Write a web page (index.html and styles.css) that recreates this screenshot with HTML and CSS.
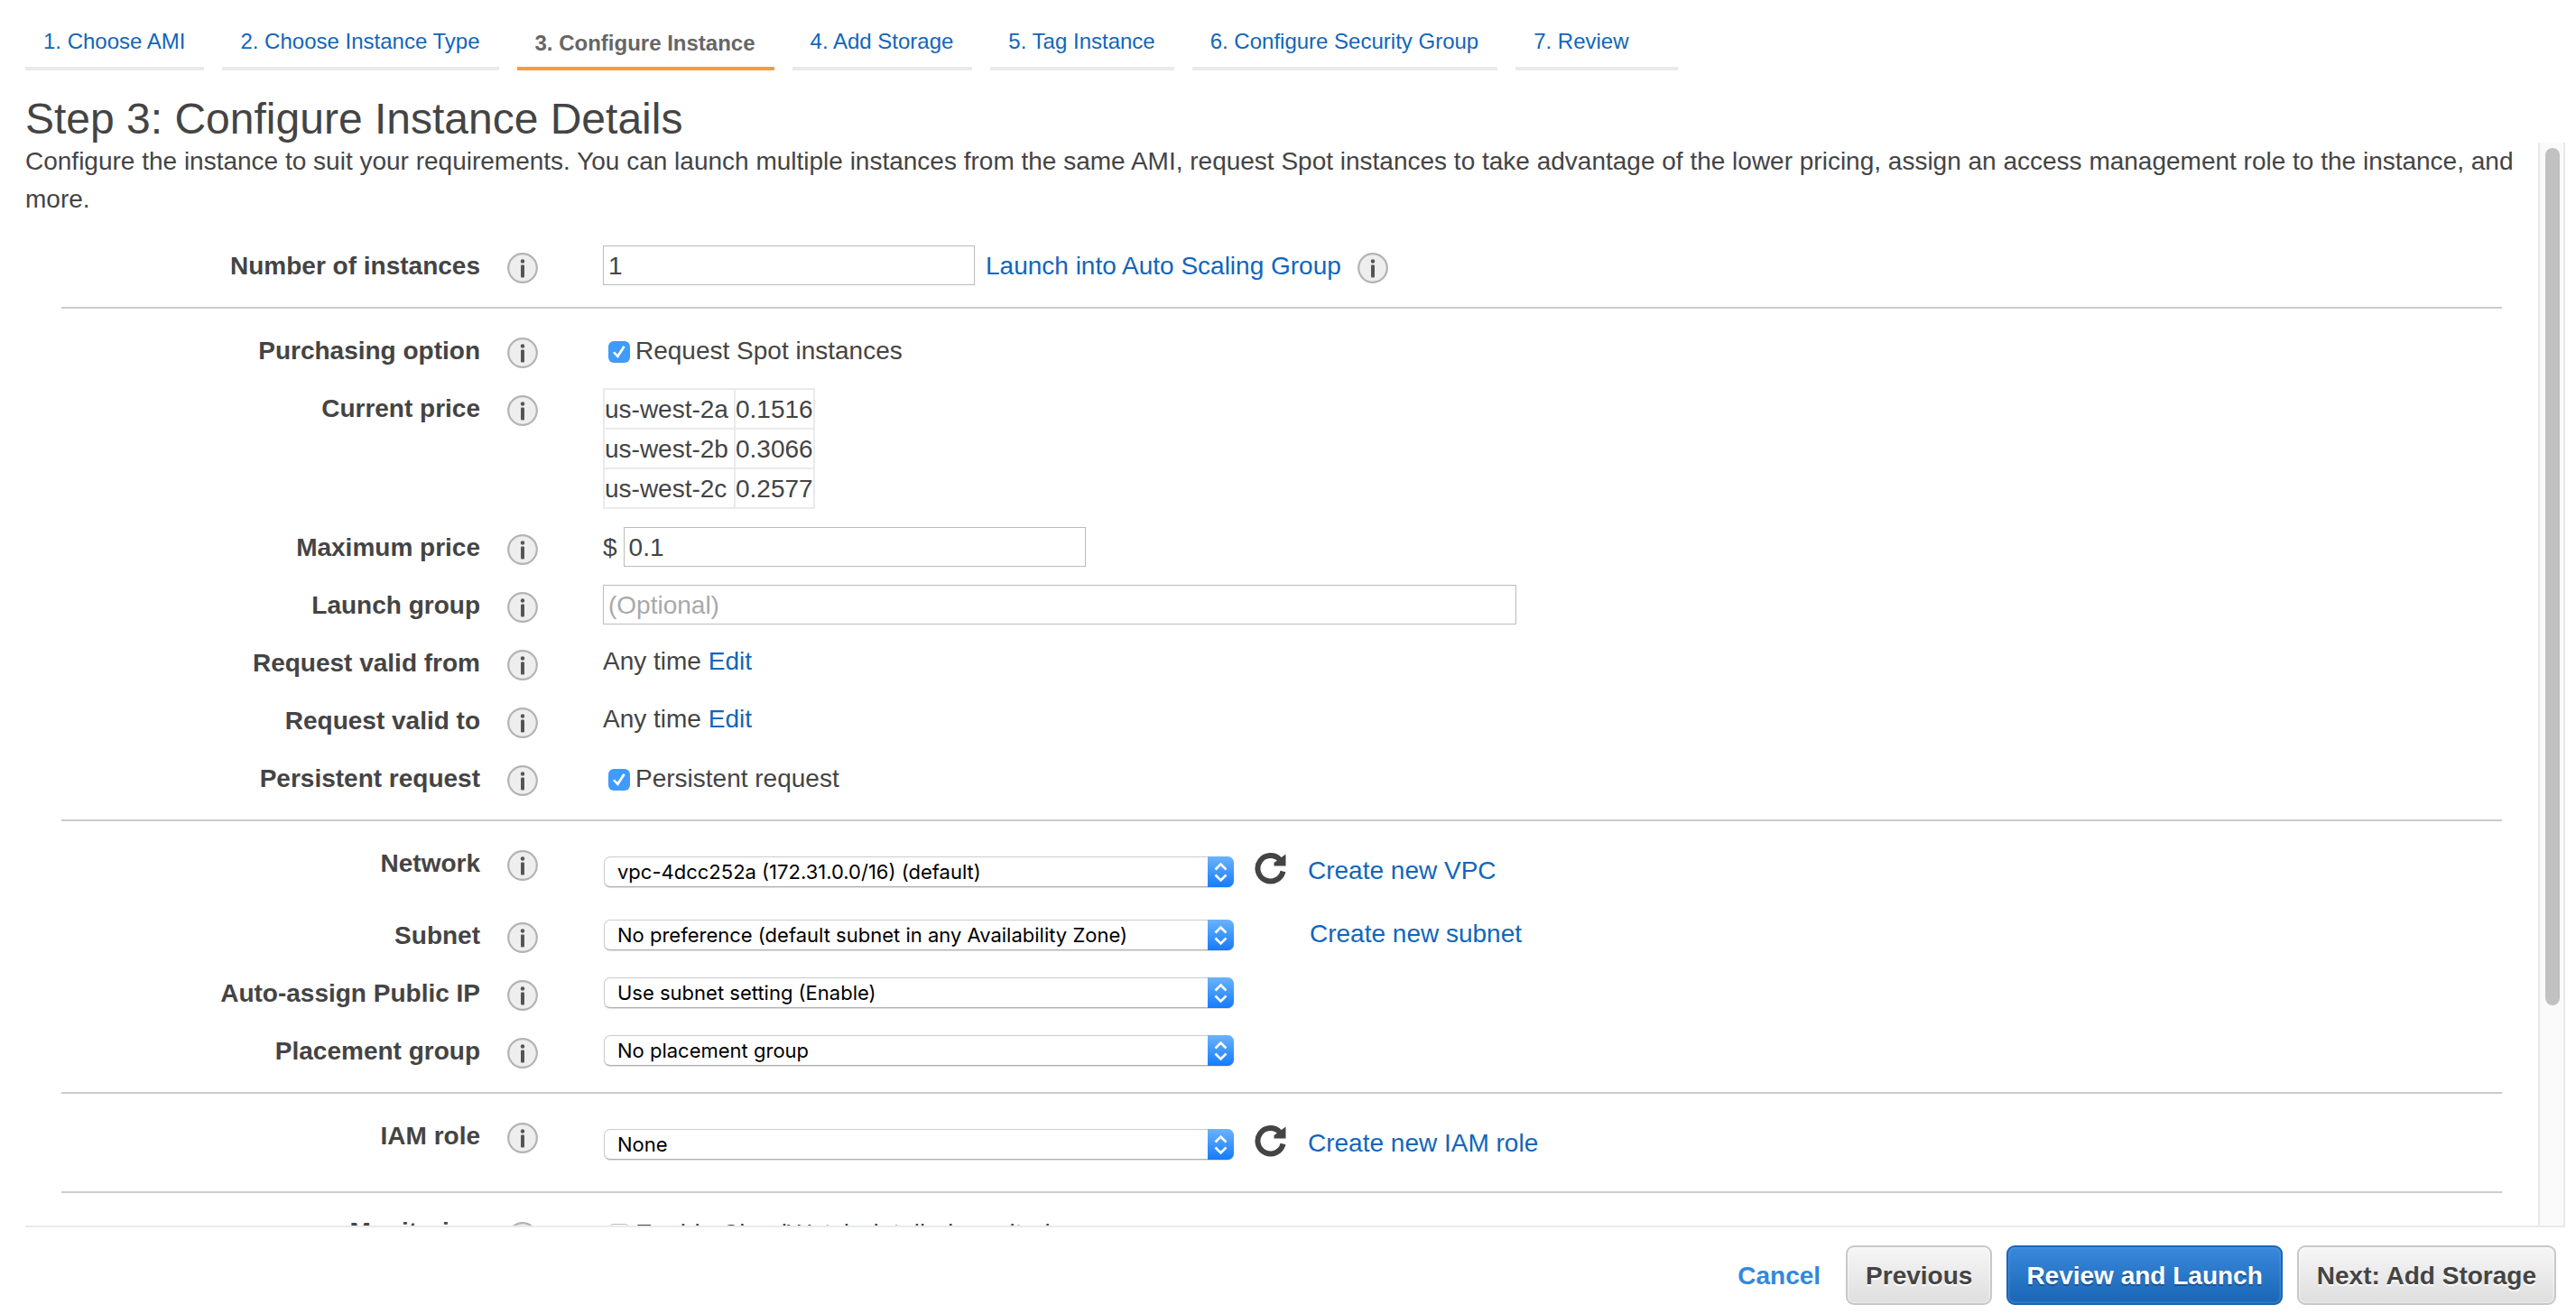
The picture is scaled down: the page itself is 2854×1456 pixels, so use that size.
FILE: index.html
```html
<!DOCTYPE html>
<html lang="en">
<head>
<meta charset="utf-8">
<title>Step 3: Configure Instance Details</title>
<link rel="stylesheet" href="styles.css">
</head>
<body>
<svg class="sprite" aria-hidden="true">
  <symbol id="info" viewBox="0 0 34 34">
    <circle cx="17" cy="17" r="15.8" fill="#eee" stroke="#b3b3b3" stroke-width="2.2"/>
    <circle cx="17" cy="9.500" r="2.200" fill="#555"/>
    <rect x="15" y="13.500" width="4" height="14" rx="1" fill="#555"/>
  </symbol>
  <symbol id="refresh" viewBox="0 0 35 35">
    <path d="M31.500 20.500A14.200 14.200 0 1 1 28 7.500" fill="none" stroke="#444" stroke-width="6"/>
    <path d="M34.500 1.500V14.500H21.500V11Z" fill="#444"/>
  </symbol>
  <symbol id="updown" viewBox="0 0 29 34">
    <path d="M8.500 14.500L14.500 8.500L20.500 14.500M8.500 20.500L14.500 26.500L20.500 20.500" fill="none" stroke="#fff" stroke-width="2.600"/>
  </symbol>
</svg>
<div class="page">
  <nav class="tabs">
    <a class="tab" href="#">1. Choose AMI</a>
    <a class="tab" href="#">2. Choose Instance Type</a>
    <a class="tab active" href="#" aria-current="step">3. Configure Instance</a>
    <a class="tab" href="#">4. Add Storage</a>
    <a class="tab" href="#">5. Tag Instance</a>
    <a class="tab" href="#">6. Configure Security Group</a>
    <a class="tab" href="#">7. Review</a>
  </nav>
  <h1 class="title">Step 3: Configure Instance Details</h1>
  <main class="content">
    <div class="scroll">
      <p class="intro">Configure the instance to suit your requirements. You can launch multiple instances from the same AMI, request Spot instances to take advantage of the lower pricing, assign an access management role to the instance, and more.</p>
      <form class="form">
        <section class="group">
          <div class="row">
            <label class="name" for="count">Number of instances</label>
            <svg class="info"><use href="#info"/></svg>
            <div class="control">
              <input class="text short" id="count" type="text" value="1">
              <a class="link beside-input" href="#">Launch into Auto Scaling Group</a>
              <svg class="info after-link"><use href="#info"/></svg>
            </div>
          </div>
        </section>
        <section class="group">
          <div class="row">
            <span class="name">Purchasing option</span>
            <svg class="info"><use href="#info"/></svg>
            <div class="control"><label class="check"><input type="checkbox" checked><span>Request Spot instances</span></label></div>
          </div>
          <div class="row">
            <span class="name">Current price</span>
            <svg class="info"><use href="#info"/></svg>
            <div class="control">
              <table class="prices">
                <tr><td class="zone">us-west-2a</td><td class="price">0.1516</td></tr>
                <tr><td class="zone">us-west-2b</td><td class="price">0.3066</td></tr>
                <tr><td class="zone">us-west-2c</td><td class="price">0.2577</td></tr>
              </table>
            </div>
          </div>
          <div class="row">
            <label class="name" for="max">Maximum price</label>
            <svg class="info"><use href="#info"/></svg>
            <div class="control money"><span class="currency">$</span><input class="text medium" id="max" type="text" value="0.1"></div>
          </div>
          <div class="row">
            <label class="name" for="group">Launch group</label>
            <svg class="info"><use href="#info"/></svg>
            <div class="control"><input class="text long" id="group" type="text" placeholder="(Optional)"></div>
          </div>
          <div class="row">
            <span class="name">Request valid from</span>
            <svg class="info"><use href="#info"/></svg>
            <div class="control"><p class="value">Any time <a href="#">Edit</a></p></div>
          </div>
          <div class="row">
            <span class="name">Request valid to</span>
            <svg class="info"><use href="#info"/></svg>
            <div class="control"><p class="value">Any time <a href="#">Edit</a></p></div>
          </div>
          <div class="row">
            <span class="name">Persistent request</span>
            <svg class="info"><use href="#info"/></svg>
            <div class="control"><label class="check"><input type="checkbox" checked><span>Persistent request</span></label></div>
          </div>
        </section>
        <section class="group">
          <div class="row tall">
            <label class="name" for="network">Network</label>
            <svg class="info"><use href="#info"/></svg>
            <div class="control">
              <span class="select"><select id="network"><option>vpc-4dcc252a (172.31.0.0/16) (default)</option></select><svg class="arrows"><use href="#updown"/></svg></span>
              <button class="refresh" type="button" aria-label="Refresh networks"><svg><use href="#refresh"/></svg></button>
              <a class="link" href="#">Create new VPC</a>
            </div>
          </div>
          <div class="row">
            <label class="name" for="subnet">Subnet</label>
            <svg class="info"><use href="#info"/></svg>
            <div class="control">
              <span class="select"><select id="subnet"><option>No preference (default subnet in any Availability Zone)</option></select><svg class="arrows"><use href="#updown"/></svg></span>
              <a class="link no-refresh" href="#">Create new subnet</a>
            </div>
          </div>
          <div class="row">
            <label class="name" for="ip">Auto-assign Public IP</label>
            <svg class="info"><use href="#info"/></svg>
            <div class="control">
              <span class="select"><select id="ip"><option>Use subnet setting (Enable)</option></select><svg class="arrows"><use href="#updown"/></svg></span>
            </div>
          </div>
          <div class="row">
            <label class="name" for="placement">Placement group</label>
            <svg class="info"><use href="#info"/></svg>
            <div class="control">
              <span class="select"><select id="placement"><option>No placement group</option></select><svg class="arrows"><use href="#updown"/></svg></span>
            </div>
          </div>
        </section>
        <section class="group">
          <div class="row tall">
            <label class="name" for="role">IAM role</label>
            <svg class="info"><use href="#info"/></svg>
            <div class="control">
              <span class="select"><select id="role"><option>None</option></select><svg class="arrows"><use href="#updown"/></svg></span>
              <button class="refresh" type="button" aria-label="Refresh roles"><svg><use href="#refresh"/></svg></button>
              <a class="link" href="#">Create new IAM role</a>
            </div>
          </div>
        </section>
        <section class="group last">
          <div class="row">
            <span class="name">Monitoring</span>
            <svg class="info"><use href="#info"/></svg>
            <div class="control"><label class="check"><input type="checkbox"><span>Enable CloudWatch detailed monitoring</span></label></div>
          </div>
        </section>
      </form>
    </div>
    <div class="track" aria-hidden="true"><div class="thumb"></div></div>
  </main>
  <footer class="actions">
    <a class="cancel" href="#">Cancel</a>
    <button class="btn" type="button">Previous</button>
    <button class="btn primary" type="button">Review and Launch</button>
    <button class="btn" type="button">Next: Add Storage</button>
  </footer>
</div>
</body>
</html>
```
FILE: styles.css
```css
* { box-sizing: border-box; }

body {
  margin: 0;
  background: #fff;
  color: #444;
  font: 28px/42px "Liberation Sans", Arial, sans-serif;
}

a {
  color: #1166bb;
  text-decoration: none;
}

p { margin: 0; }

.sprite { display: none; }

.page {
  display: flex;
  flex-direction: column;
  height: 100vh;
}

/* Wizard steps */
.tabs {
  display: flex;
  gap: 20px;
  padding-left: 28px;
}

.tab {
  padding: 32px 21px 14px 20px;
  border-bottom: 4px solid #eaeaea;
  font-size: 24px;
  line-height: 28px;
  white-space: nowrap;
}

.tab:last-child { min-width: 180px; }

.tab.active {
  padding-top: 34px;
  padding-bottom: 12px;
  border-color: #ff9933;
  color: #666;
  font-weight: bold;
}

.title {
  margin: 0;
  padding: 28px 28px 0;
  font-size: 48px;
  font-weight: normal;
  line-height: 52px;
}

/* Scrolling body */
.content {
  flex: 1;
  display: flex;
  min-height: 0;
  margin: 0 12px 0 28px;
  border-bottom: 2px solid #eaeaea;
}

.scroll {
  flex: 1;
  overflow-y: auto;
  scrollbar-width: none;
}

.track {
  width: 30px;
  padding: 6px 4px 6px 6px;
  border: solid #e8e8e8;
  border-width: 0 2px;
  background: #fafafa;
}

.thumb {
  width: 16px;
  height: 80%;
  border-radius: 8px;
  background: #c1c1c1;
}

.intro { margin-bottom: 6px; }

.form { padding: 0 40px; }

.group {
  display: flex;
  flex-direction: column;
  gap: 20px;
  padding: 24px 0;
  border-bottom: 2px solid #ccc;
}

.group.last {
  padding-bottom: 86px;
  border: 0;
}

.row {
  display: grid;
  grid-template-columns: 464px 34px 1fr;
  min-height: 44px;
}

.row.tall { min-height: 60px; }

.name {
  padding-top: 2px;
  font-weight: bold;
  text-align: right;
}

.info {
  width: 34px;
  height: 34px;
  margin: 8px 0 0 30px;
}

.control {
  display: flex;
  align-items: center;
  margin-left: 102px;
}

.link,
.currency { padding-top: 2px; }

.beside-input { margin-left: 12px; }
.info.after-link { margin: 6px 0 0 18px; }

.text {
  height: 44px;
  padding: 2px 5px 0;
  border: 1px solid #bbb;
  background: #fff;
  color: #444;
  font: inherit;
}

.text::placeholder { color: #a9a9a9; }
.text.short { width: 412px; }
.text.medium { width: 512px; }
.text.long { width: 1012px; }

.money { gap: 7px; }

.value {
  align-self: flex-start;
  padding-top: 2px;
  line-height: 38px;
}

.check {
  display: flex;
  align-items: center;
  gap: 6px;
  padding-left: 6px;
}

.check span { padding-top: 2px; }

.last .name,
.last .check {
  align-self: flex-start;
  padding-top: 0;
  line-height: 38px;
}

.check input {
  appearance: none;
  width: 24px;
  height: 24px;
  margin: 4px 0 0;
  border: 1px solid #bbb;
  border-radius: 6px;
}

.check input:checked {
  display: grid;
  place-items: center;
  border: 0;
  background: #3f9bfc;
}

.check input:checked::before {
  content: "";
  width: 14px;
  height: 14px;
  background: #fff;
  clip-path: polygon(0 58%, 14% 46%, 36% 70%, 82% 0, 98% 10%, 40% 100%);
}

.prices { border-collapse: collapse; }

.prices td {
  padding: 2px 0 0;
  border: 2px solid #eaeaea;
  line-height: 40px;
}

.zone { width: 145px; }
.price { width: 87px; }

/* Drop-downs */
.select {
  position: relative;
  display: flex;
  width: 698px;
  height: 34px;
  margin-left: 1px;
}

.tall .select { margin-top: 4px; }

.select select {
  appearance: none;
  width: 100%;
  padding: 0 40px 0 14px;
  border: 1px solid #ccc;
  border-bottom-color: #b0b0b0;
  border-radius: 7px;
  box-shadow: 0 1px 1px #ddd;
  background: #fff;
  color: #000;
  font: 22px/30px Inter, sans-serif;
}

.arrows {
  position: absolute;
  top: 0;
  right: 0;
  width: 29px;
  height: 34px;
  border-radius: 0 7px 7px 0;
  background: linear-gradient(#6bb3fa, #147bfe);
  pointer-events: none;
}

.refresh {
  display: flex;
  margin: 0 24px 4px 23px;
  padding: 0;
  border: 0;
  background: none;
}

.refresh svg {
  width: 35px;
  height: 35px;
}

.no-refresh {
  align-self: flex-start;
  margin-left: 84px;
  line-height: 38px;
}

/* Footer */
.actions {
  display: flex;
  justify-content: flex-end;
  align-items: center;
  gap: 16px;
  padding: 20px 22px 10px;
  font-weight: bold;
}

.cancel {
  margin-right: 12px;
  padding-top: 2px;
  color: #3388dd;
}

.btn {
  height: 66px;
  padding: 2px 20px 0;
  border: 2px solid #c8c8c8;
  border-radius: 9px;
  background: linear-gradient(#f6f6f6, #dedede);
  box-shadow: inset 0 0 3px #fff;
  color: #444;
  font: inherit;
  text-shadow: 0 2px 0 #fff;
}

.btn.primary {
  border-color: #1b65b5;
  background: linear-gradient(#3888dc, #1a66b5);
  box-shadow: inset 0 0 3px #6aa8e6;
  color: #fff;
  text-shadow: 0 2px 0 #1a5395;
}
```
